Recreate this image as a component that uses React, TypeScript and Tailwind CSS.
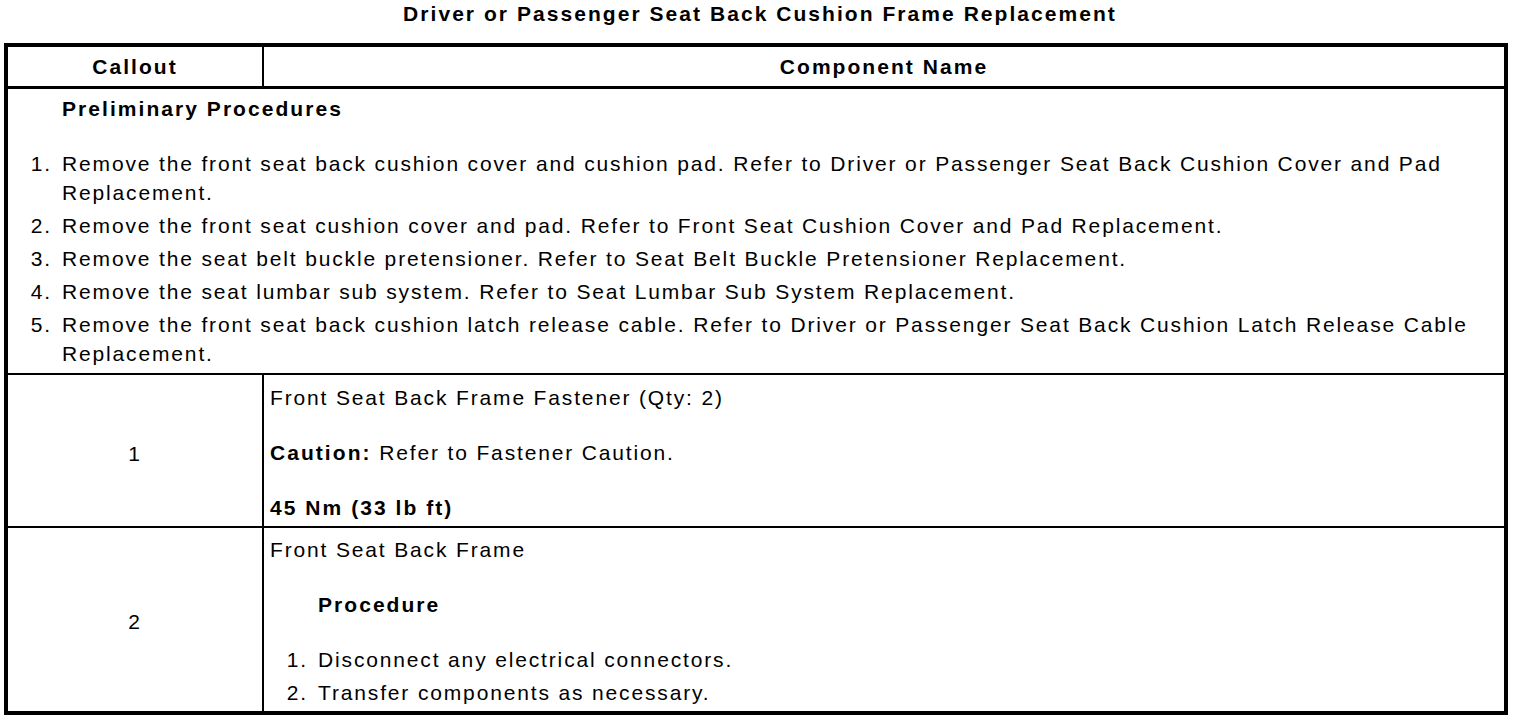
import React from "react";

const prelim = [
  "Remove the front seat back cushion cover and cushion pad. Refer to Driver or Passenger Seat Back Cushion Cover and Pad Replacement.",
  "Remove the front seat cushion cover and pad. Refer to Front Seat Cushion Cover and Pad Replacement.",
  "Remove the seat belt buckle pretensioner. Refer to Seat Belt Buckle Pretensioner Replacement.",
  "Remove the seat lumbar sub system. Refer to Seat Lumbar Sub System Replacement.",
  "Remove the front seat back cushion latch release cable. Refer to Driver or Passenger Seat Back Cushion Latch Release Cable Replacement.",
];

function NumList({ items, numW }: { items: string[]; numW: string }) {
  return (
    <ol className="flex flex-col gap-[4px]">
      {items.map((t, i) => (
        <li key={i} className="flex">
          <span className={`${numW} shrink-0 text-right pr-[10px]`}>{i + 1}.</span>
          <span>{t}</span>
        </li>
      ))}
    </ol>
  );
}

export default function App() {
  return (
    <div className="min-h-screen bg-white text-black font-['Liberation_Sans',Arial,sans-serif] text-[21px] leading-[29px] tracking-[1.85px]">
      <h1 className="h-[43px] text-center font-bold tracking-[2.05px] leading-[28px]">
        Driver or Passenger Seat Back Cushion Frame Replacement
      </h1>
      <div className="ml-[4px] w-[1504px] border-[4px] border-black">
        {/* header */}
        <div className="flex h-[42px] border-b-[3px] border-black font-bold tracking-[2.05px]">
          <div className="w-[256px] flex items-center justify-center border-r-[2px] border-black">Callout</div>
          <div className="flex-1 flex items-center justify-center">Component Name</div>
        </div>

        {/* preliminary */}
        <div className="border-b-[2px] border-black pt-[5px] pb-[5px] pr-[20px]">
          <div className="pl-[54px] font-bold tracking-[2.05px] mb-[26px]">Preliminary Procedures</div>
          <NumList items={prelim} numW="w-[54px]" />
        </div>

        {/* row 1 */}
        <div className="flex border-b-[2px] border-black">
          <div className="w-[256px] flex items-center justify-center pt-[5px] border-r-[2px] border-black">1</div>
          <div className="flex-1 pl-[6px] pt-[8px] pb-[4px] flex flex-col gap-[26px]">
            <p>Front Seat Back Frame Fastener (Qty: 2)</p>
            <p>
              <b className="tracking-[2.05px]">Caution:</b> Refer to Fastener Caution.
            </p>
            <p className="font-bold tracking-[2.05px]">45 Nm (33 lb ft)</p>
          </div>
        </div>

        {/* row 2 */}
        <div className="flex">
          <div className="w-[256px] flex items-center justify-center pt-[4px] border-r-[2px] border-black">2</div>
          <div className="flex-1 pl-[6px] pt-[7px] pb-[4px]">
            <p className="mb-[26px]">Front Seat Back Frame</p>
            <p className="pl-[48px] font-bold tracking-[2.05px] mb-[26px]">Procedure</p>
            <NumList
              items={["Disconnect any electrical connectors.", "Transfer components as necessary."]}
              numW="w-[48px]"
            />
          </div>
        </div>
      </div>
    </div>
  );
}
